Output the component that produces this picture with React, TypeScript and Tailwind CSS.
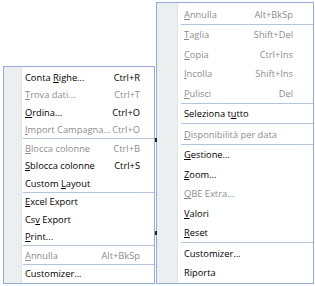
import type { ReactNode } from 'react'

type Entry = { label: string; shortcut?: string; disabled?: boolean } | 'sep'

// "&" marks the mnemonic letter, as in Windows menus
const leftItems: Entry[] = [
  { label: 'Conta &Righe...', shortcut: 'Ctrl+R' },
  { label: '&Trova dati...', shortcut: 'Ctrl+T', disabled: true },
  { label: '&Ordina...', shortcut: 'Ctrl+O' },
  { label: '&Import Campagna...', shortcut: 'Ctrl+O', disabled: true },
  'sep',
  { label: '&Blocca colonne', shortcut: 'Ctrl+B', disabled: true },
  { label: '&Sblocca colonne', shortcut: 'Ctrl+S' },
  { label: 'Custom &Layout' },
  'sep',
  { label: '&Excel Export' },
  { label: 'Cs&v Export' },
  { label: '&Print...' },
  'sep',
  { label: '&Annulla', shortcut: 'Alt+BkSp', disabled: true },
  'sep',
  { label: 'Customizer...' },
]

const rightItems: Entry[] = [
  { label: '&Annulla', shortcut: 'Alt+BkSp', disabled: true },
  'sep',
  { label: '&Taglia', shortcut: 'Shift+Del', disabled: true },
  { label: '&Copia', shortcut: 'Ctrl+Ins', disabled: true },
  { label: '&Incolla', shortcut: 'Shift+Ins', disabled: true },
  { label: '&Pulisci', shortcut: 'Del', disabled: true },
  'sep',
  { label: 'Seleziona t&utto' },
  'sep',
  { label: '&Disponibilità per data', disabled: true },
  'sep',
  { label: '&Gestione...' },
  { label: '&Zoom...' },
  { label: '&QBE Extra...', disabled: true },
  { label: '&Valori' },
  { label: '&Reset' },
  'sep',
  { label: 'Customizer...' },
  { label: 'Riporta' },
]

const renderLabel = (label: string): ReactNode => {
  const i = label.indexOf('&')
  if (i < 0) return label
  return (
    <>
      {label.slice(0, i)}
      <span className="underline underline-offset-[1px]">{label[i + 1]}</span>
      {label.slice(i + 2)}
    </>
  )
}

interface MenuProps {
  items: Entry[]
  rowClass: string
  gutterClass: string
  textClass: string
  sepClass: string
  className: string
}

function Menu({ items, rowClass, gutterClass, textClass, sepClass, className }: MenuProps) {
  const gutter = <div className={`shrink-0 bg-[#eceff0] border-r border-[#e2e4e4] ${gutterClass}`} />
  return (
    <div className={`border border-[#94acd9] bg-white ${className}`}>
      <div className="flex h-px">{gutter}</div>
      {items.map((item, idx) =>
        item === 'sep' ? (
          <div key={idx} className="flex h-px">
            {gutter}
            <div className={`flex-1 bg-[#b4c4dd] ${sepClass}`} />
          </div>
        ) : (
          <div key={idx} className={`flex ${rowClass}`}>
            {gutter}
            <div
              className={`flex-1 flex items-center pt-px whitespace-nowrap ${textClass} ${
                item.disabled ? 'text-[#8d8d8d]' : 'text-black'
              }`}
            >
              <span>{renderLabel(item.label)}</span>
              {item.shortcut && <span className="ml-auto">{item.shortcut}</span>}
            </div>
          </div>
        )
      )}
      <div className="flex h-px">{gutter}</div>
    </div>
  )
}

export default function App() {
  return (
    <div className="relative w-[315px] h-[286px] overflow-hidden bg-white flex items-start pl-[3px] font-['Open_Sans',sans-serif] text-[9.3px] leading-none">
      <Menu
        items={leftItems}
        className="mt-[66px] w-[152px]"
        rowClass="h-[17.5px]"
        gutterClass="w-[18px]"
        textClass="pl-[3px] pr-[14px]"
        sepClass="ml-px"
      />
      <Menu
        items={rightItems}
        className="mt-[2px] ml-px w-[158px]"
        rowClass="h-[19.5px]"
        gutterClass="w-[21px]"
        textClass="pl-[6px] pr-[20px]"
        sepClass="ml-[3px]"
      />
      {/* small dark ticks at the edge between the two menus */}
      <div className="absolute left-[155px] top-[138px] w-[2px] h-[4px] bg-[#222]" />
      <div className="absolute left-[155px] top-[231px] w-[2px] h-[4px] bg-[#222]" />
    </div>
  )
}
